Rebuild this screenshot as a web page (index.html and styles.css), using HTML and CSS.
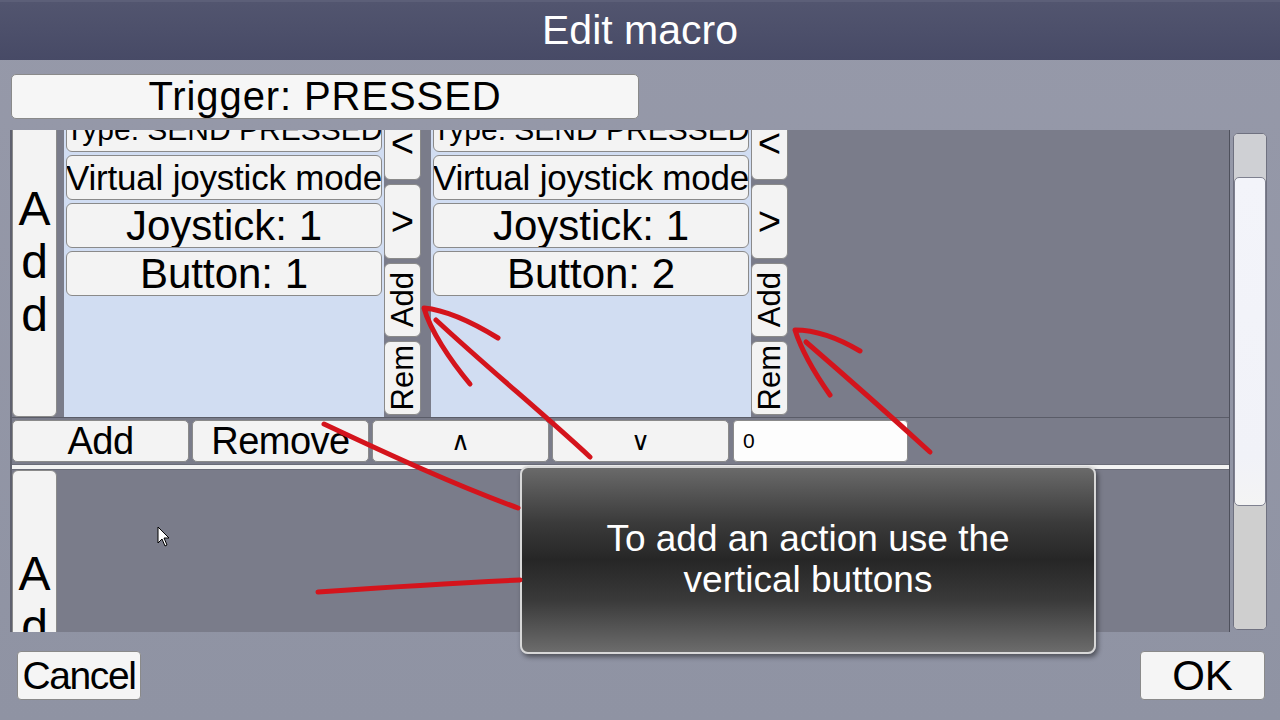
FILE: index.html
```html
<!DOCTYPE html>
<html>
<head>
<meta charset="utf-8">
<link rel="stylesheet" href="styles.css">
</head>
<body>
<div class="screen">
  <header class="titlebar">Edit macro</header>
  <div class="trigger-row"><div class="btn trigger">Trigger: PRESSED</div></div>
  <div class="main">
    <div class="viewport">
      <div class="scroll-content">
        <div class="macro">
          <div class="btn vadd"><span>A</span><span>d</span><span>d</span></div>
          <div class="panel">
            <div class="list">
              <div class="btn item type">Type: SEND PRESSED</div>
              <div class="btn item small">Virtual joystick mode</div>
              <div class="btn item">Joystick: 1</div>
              <div class="btn item">Button: 1</div>
            </div>
            <div class="side">
              <div class="btn sbtn">&lt;</div>
              <div class="btn sbtn">&gt;</div>
              <div class="btn sbtn rot"><span>Add</span></div>
              <div class="btn sbtn rot"><span>Rem</span></div>
            </div>
          </div>
          <div class="panel">
            <div class="list">
              <div class="btn item type">Type: SEND PRESSED</div>
              <div class="btn item small">Virtual joystick mode</div>
              <div class="btn item">Joystick: 1</div>
              <div class="btn item">Button: 2</div>
            </div>
            <div class="side">
              <div class="btn sbtn">&lt;</div>
              <div class="btn sbtn">&gt;</div>
              <div class="btn sbtn rot"><span>Add</span></div>
              <div class="btn sbtn rot"><span>Rem</span></div>
            </div>
          </div>
        </div>
        <div class="toolbar">
          <div class="btn tbtn">Add</div>
          <div class="btn tbtn">Remove</div>
          <div class="btn tbtn arrow">&#x2227;</div>
          <div class="btn tbtn arrow">&#x2228;</div>
          <div class="input">0</div>
        </div>
        <div class="divider"></div>
        <div class="macro macro2">
          <div class="btn vadd vadd2"><span>A</span><span>d</span><span>d</span></div>
        </div>
      </div>
    </div>
    <div class="scrollbar">
      <div class="track-top"></div>
      <div class="thumb"></div>
      <div class="track-bottom"></div>
    </div>
  </div>
  <footer class="footer">
    <div class="btn fbtn cancel">Cancel</div>
    <div class="btn fbtn ok">OK</div>
  </footer>

  <div class="tooltip">To add an action use the<br>vertical buttons</div>

  <svg class="annot" width="1280" height="720" viewBox="0 0 1280 720">
    <g fill="none" stroke="#d4141c" stroke-width="5" stroke-linecap="round" stroke-linejoin="round">
      <path d="M498 338 C472 322 445 310 424 308 C430 330 450 360 470 384"/>
      <path d="M436 320 C490 370 545 415 590 457"/>
      <path d="M860 351 C838 338 815 330 795 330 C802 352 818 378 830 395"/>
      <path d="M806 342 C850 380 895 420 930 452"/>
      <path d="M324 424 C390 455 455 485 518 508"/>
      <path d="M318 592 C390 587 455 583 520 580"/>
    </g>
  </svg>
  <svg class="cursor" width="14" height="22" viewBox="0 0 14 22">
    <path d="M1 1 L1 17 L5 13 L8 20 L10 19 L7 12 L12 12 Z" fill="#fff" stroke="#000" stroke-width="1"/>
  </svg>
</div>
</body>
</html>
```

FILE: styles.css
```css
* { box-sizing: border-box; }
html, body { margin: 0; padding: 0; }
body {
  width: 1280px;
  height: 720px;
  overflow: hidden;
  font-family: "Liberation Sans", Arial, sans-serif;
  color: #000;
}
.screen {
  position: relative;
  width: 1280px;
  height: 720px;
  background: linear-gradient(#9699a9, #8f93a3);
  display: flex;
  flex-direction: column;
}
.titlebar {
  height: 60px;
  flex: none;
  background: linear-gradient(#52556f, #474a66);
  border-top: 2px solid #5c5f78;
  color: #fff;
  font-size: 41px;
  line-height: 56px;
  text-align: center;
}
.btn {
  background: #f3f3f3;
  border: 1px solid #8a8a8a;
  border-radius: 5px;
  display: flex;
  align-items: center;
  justify-content: center;
  white-space: nowrap;
  overflow: hidden;
}
.trigger-row {
  padding: 14px 0 0 11px;
  flex: none;
}
.trigger {
  width: 628px;
  height: 45px;
  font-size: 40px;
  letter-spacing: 0.9px;
  background: #f6f6f6;
}
.main {
  margin-top: 11px;
  height: 502px;
  flex: none;
  display: flex;
}
.viewport {
  margin-left: 10px;
  width: 1220px;
  height: 502px;
  overflow: hidden;
  background: #7b7d8b;
  border-left: 2px solid #5f616e;
  border-right: 1px solid #4e505c;
}
.scroll-content {
  margin-top: -26px;
}
.macro {
  height: 314px;
  display: flex;
  background: #7a7c8a;
  border-bottom: 1px solid #5a5c68;
}
.vadd {
  width: 45px;
  flex: none;
  flex-direction: column;
  font-size: 48px;
  line-height: 53px;
  border-radius: 6px;
  padding-top: 2px;
}
.panel {
  width: 357px;
  flex: none;
  margin-left: 7px;
  display: flex;
  background: #d1ddf2;
}
.panel + .panel {
  margin-left: 10px;
}
.list {
  flex: 1;
  min-width: 0;
  display: flex;
  flex-direction: column;
  gap: 3px;
  padding: 3px 2px 0 2px;
}
.item {
  height: 45px;
  flex: none;
  font-size: 42px;
  border-radius: 6px;
}
.item.small {
  font-size: 35px;
  letter-spacing: -0.2px;
}
.item.type {
  font-size: 30px;
}
.side {
  width: 37px;
  flex: none;
  display: flex;
  flex-direction: column;
  gap: 4px;
  padding: 2px 0;
  background: #7a7c8a;
}
.sbtn {
  flex: 1 1 0;
  min-height: 0;
  font-size: 40px;
  border-radius: 6px;
}
.rot span {
  writing-mode: vertical-rl;
  transform: rotate(180deg);
  font-size: 31px;
}
.toolbar {
  height: 46px;
  display: flex;
  gap: 3px;
  padding: 2px 0 2px 0;
  background: #7a7c8a;
}
.tbtn {
  width: 177px;
  height: 42px;
  font-size: 38px;
  border-radius: 5px;
  letter-spacing: -0.5px;
}
.arrow {
  font-size: 26px;
}
.input {
  width: 175px;
  height: 42px;
  margin-left: 1px;
  background: #fdfdfd;
  border: 1px solid #8a8a8a;
  border-radius: 4px;
  font-size: 21px;
  line-height: 40px;
  padding-left: 9px;
}
.divider {
  height: 6px;
  background: #f3f3f3;
  border-top: 1px solid #6a6c78;
  border-bottom: 1px solid #6a6c78;
}
.macro2 {
  height: 200px;
  border-bottom: none;
}
.vadd2 {
  justify-content: flex-start;
  padding-top: 76px;
  border-radius: 6px 6px 0 0;
}
.scrollbar {
  margin-left: 3px;
  margin-top: 3px;
  width: 34px;
  height: 497px;
  display: flex;
  flex-direction: column;
  border: 1px solid #6f7180;
  border-radius: 5px;
  overflow: hidden;
  background: #d0d0d2;
}
.track-top {
  height: 43px;
  background: #cfd0d4;
}
.thumb {
  height: 329px;
  background: linear-gradient(#f3f4fa, #f1f2f8 85%, #f4f4f4);
  border: 1px solid #7f8190;
  border-radius: 5px;
}
.track-bottom {
  flex: 1;
  background: #cfcfcf;
}
.footer {
  display: flex;
  justify-content: space-between;
  padding: 19px 15px 0 17px;
}
.fbtn {
  height: 49px;
  font-size: 42px;
  border-radius: 4px;
  background: #f5f5f5;
}
.cancel {
  width: 124px;
  font-size: 39px;
  letter-spacing: -1.4px;
}
.ok {
  width: 125px;
}
.tooltip {
  position: absolute;
  left: 520px;
  top: 466px;
  width: 576px;
  height: 188px;
  border: 2px solid #d8d8d8;
  border-radius: 8px;
  background: linear-gradient(#6a6a6a 0%, #3a3a3a 30%, #262626 50%, #3a3a3a 72%, #6c6c6c 100%);
  box-shadow: 2px 3px 5px rgba(0,0,0,0.45);
  color: #fff;
  font-size: 37px;
  line-height: 41px;
  text-align: center;
  padding-top: 50px;
}
.annot {
  position: absolute;
  left: 0;
  top: 0;
  pointer-events: none;
}
.cursor {
  position: absolute;
  left: 157px;
  top: 526px;
}
```
